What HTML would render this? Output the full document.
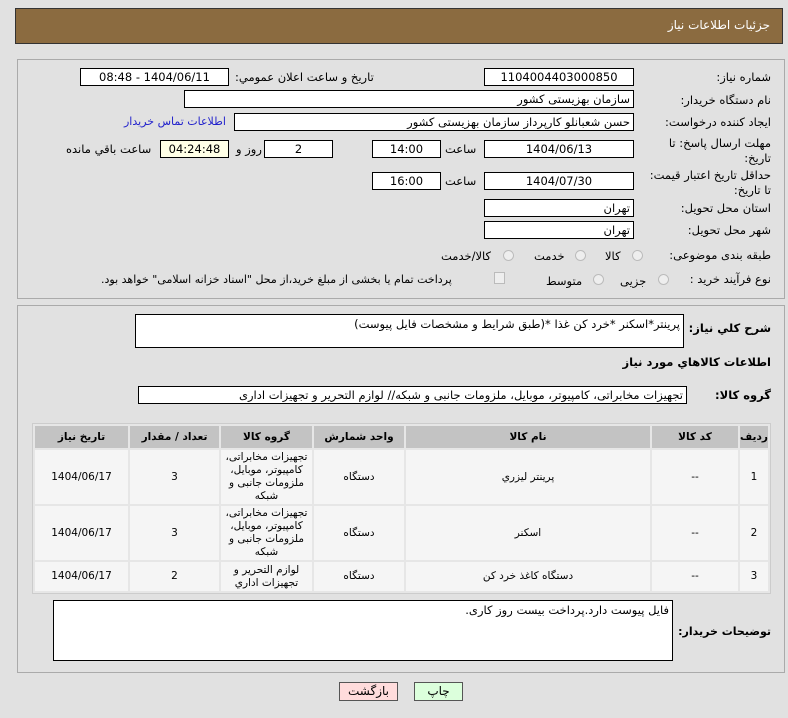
<!DOCTYPE html>
<html><head><meta charset="utf-8"><style>
*{box-sizing:border-box;margin:0;padding:0}
body{width:788px;height:718px;background:#e1e1e1;font-family:"DejaVu Sans","Liberation Sans",sans-serif;font-size:11px;color:#000;position:relative;overflow:hidden;direction:rtl}
.a{position:absolute;white-space:nowrap}
.bx{position:absolute;background:#fff;border:1px solid #000;height:18px;line-height:16px;text-align:center;font-size:11.5px;overflow:hidden}
.r{text-align:right;padding-right:3px}
.lbl{position:absolute;white-space:nowrap;font-size:11.5px}
.rad{position:absolute;width:11px;height:11px;border:1px solid #bbb;border-radius:50%;background:#eee}
table{position:absolute;left:32px;top:423px;width:739px;border-collapse:separate;border-spacing:2px;background:#e6e6e6;border:1px solid #ccc}
td,th{text-align:center;font-size:10.5px}
th{background:#c3c3c3;height:22px;font-weight:bold}
td{background:#f5f5f5;line-height:13px}
</style></head><body>
<div class="a" style="left:15px;top:8px;width:768px;height:36px;background:#8b6b40;border:1px solid #333"></div>
<div class="a" style="right:18px;top:18px;color:#fff;font-size:12px">جزئیات اطلاعات نیاز</div>

<div class="a" style="left:17px;top:59px;width:768px;height:240px;border:1px solid #aaa"></div>
<div class="a" style="left:17px;top:305px;width:768px;height:368px;border:1px solid #aaa"></div>

<div class="lbl" style="right:17px;top:70px">شماره نیاز:</div>
<div class="bx" style="left:484px;top:68px;width:150px">1104004403000850</div>
<div class="lbl" style="left:235px;top:70px">تاريخ و ساعت اعلان عمومي:</div>
<div class="bx" style="left:80px;top:68px;width:149px">1404/06/11 - 08:48</div>

<div class="lbl" style="right:17px;top:93px">نام دستگاه خریدار:</div>
<div class="bx r" style="left:184px;top:90px;width:450px">سازمان بهزیستی کشور</div>

<div class="lbl" style="right:17px;top:115px">ایجاد کننده درخواست:</div>
<div class="bx r" style="left:234px;top:113px;width:400px">حسن  شعبانلو کارپرداز سازمان بهزیستی کشور</div>
<div class="lbl" style="left:124px;top:115px;color:#2222cc;font-size:11px">اطلاعات تماس خریدار</div>

<div class="lbl" style="right:17px;top:136px;line-height:15px;text-align:right">مهلت ارسال پاسخ: تا<br>تاریخ:</div>
<div class="bx" style="left:484px;top:140px;width:150px">1404/06/13</div>
<div class="lbl" style="left:445px;top:142px">ساعت</div>
<div class="bx" style="left:372px;top:140px;width:69px">14:00</div>
<div class="bx" style="left:264px;top:140px;width:69px">2</div>
<div class="lbl" style="left:236px;top:142px">روز و</div>
<div class="bx" style="left:160px;top:140px;width:69px;background:#ffffe6">04:24:48</div>
<div class="lbl" style="left:66px;top:142px">ساعت باقي مانده</div>

<div class="lbl" style="right:17px;top:168px;line-height:15px;text-align:right">حداقل تاریخ اعتبار قیمت:<br>تا تاریخ:</div>
<div class="bx" style="left:484px;top:172px;width:150px">1404/07/30</div>
<div class="lbl" style="left:445px;top:174px">ساعت</div>
<div class="bx" style="left:372px;top:172px;width:69px">16:00</div>

<div class="lbl" style="right:17px;top:201px">استان محل تحویل:</div>
<div class="bx r" style="left:484px;top:199px;width:150px">تهران</div>
<div class="lbl" style="right:17px;top:223px">شهر محل تحویل:</div>
<div class="bx r" style="left:484px;top:221px;width:150px">تهران</div>

<div class="lbl" style="right:17px;top:248px">طبقه بندی موضوعی:</div>
<div class="rad" style="left:632px;top:250px"></div><div class="lbl" style="left:605px;top:249px">کالا</div>
<div class="rad" style="left:575px;top:250px"></div><div class="lbl" style="left:534px;top:249px">خدمت</div>
<div class="rad" style="left:503px;top:250px"></div><div class="lbl" style="left:441px;top:249px">کالا/خدمت</div>

<div class="lbl" style="right:17px;top:272px">نوع فرآیند خرید :</div>
<div class="rad" style="left:658px;top:274px"></div><div class="lbl" style="left:620px;top:274px">جزیی</div>
<div class="rad" style="left:593px;top:274px"></div><div class="lbl" style="left:546px;top:274px">متوسط</div>
<div class="a" style="left:494px;top:272px;width:11px;height:12px;border:1px solid #bbb;background:#eee"></div>
<div class="lbl" style="left:101px;top:273px;font-size:11px">پرداخت تمام یا بخشی از مبلغ خرید،از محل "اسناد خزانه اسلامی" خواهد بود.</div>

<div class="lbl" style="right:17px;top:321px;font-weight:bold">شرح کلي نياز:</div>
<div class="a" style="left:135px;top:314px;width:549px;height:34px;background:#fff;border:1px solid #000;text-align:right;padding-right:3px;font-size:11.5px;line-height:18px">پرينتر*اسكنر *خرد كن غذا *(طبق شرايط و مشخصات فايل پيوست)</div>
<div class="lbl" style="right:17px;top:355px;font-weight:bold">اطلاعات کالاهاي مورد نياز</div>
<div class="lbl" style="right:17px;top:388px;font-weight:bold">گروه کالا:</div>
<div class="bx r" style="left:138px;top:386px;width:549px">تجهیزات مخابراتی، کامپیوتر، موبایل، ملزومات جانبی و شبکه// لوازم التحریر و تجهیزات اداری</div>

<table>
<tr><th style="width:28px">رديف</th><th style="width:86px">کد کالا</th><th>نام کالا</th><th style="width:90px">واحد شمارش</th><th style="width:91px">گروه کالا</th><th style="width:89px">تعداد / مقدار</th><th style="width:93px">تاریخ نیاز</th></tr>
<tr style="height:54px"><td>1</td><td>--</td><td>پرينتر ليزري</td><td>دستگاه</td><td>تجهیزات مخابراتی، کامپیوتر، موبایل، ملزومات جانبی و شبکه</td><td>3</td><td>1404/06/17</td></tr>
<tr style="height:54px"><td>2</td><td>--</td><td>اسكنر</td><td>دستگاه</td><td>تجهیزات مخابراتی، کامپیوتر، موبایل، ملزومات جانبی و شبکه</td><td>3</td><td>1404/06/17</td></tr>
<tr style="height:29px"><td>3</td><td>--</td><td>دستگاه کاغذ خرد کن</td><td>دستگاه</td><td>لوازم التحرير و تجهيزات اداري</td><td>2</td><td>1404/06/17</td></tr>
</table>

<div class="lbl" style="right:17px;top:625px;font-weight:bold;font-size:11px">توضیحات خریدار:</div>
<div class="a" style="left:53px;top:600px;width:620px;height:61px;background:#fff;border:1px solid #000;text-align:right;padding-right:3px;line-height:18px;font-size:11.5px">فایل پیوست دارد.پرداخت بیست روز کاری.</div>

<div class="a" style="left:339px;top:682px;width:59px;height:19px;background:#ffdcdc;border:1px solid #555;text-align:center;line-height:17px;font-size:12px">بازگشت</div>
<div class="a" style="left:414px;top:682px;width:49px;height:19px;background:#dcffdc;border:1px solid #555;text-align:center;line-height:17px;font-size:12px">چاپ</div>
</body></html>
